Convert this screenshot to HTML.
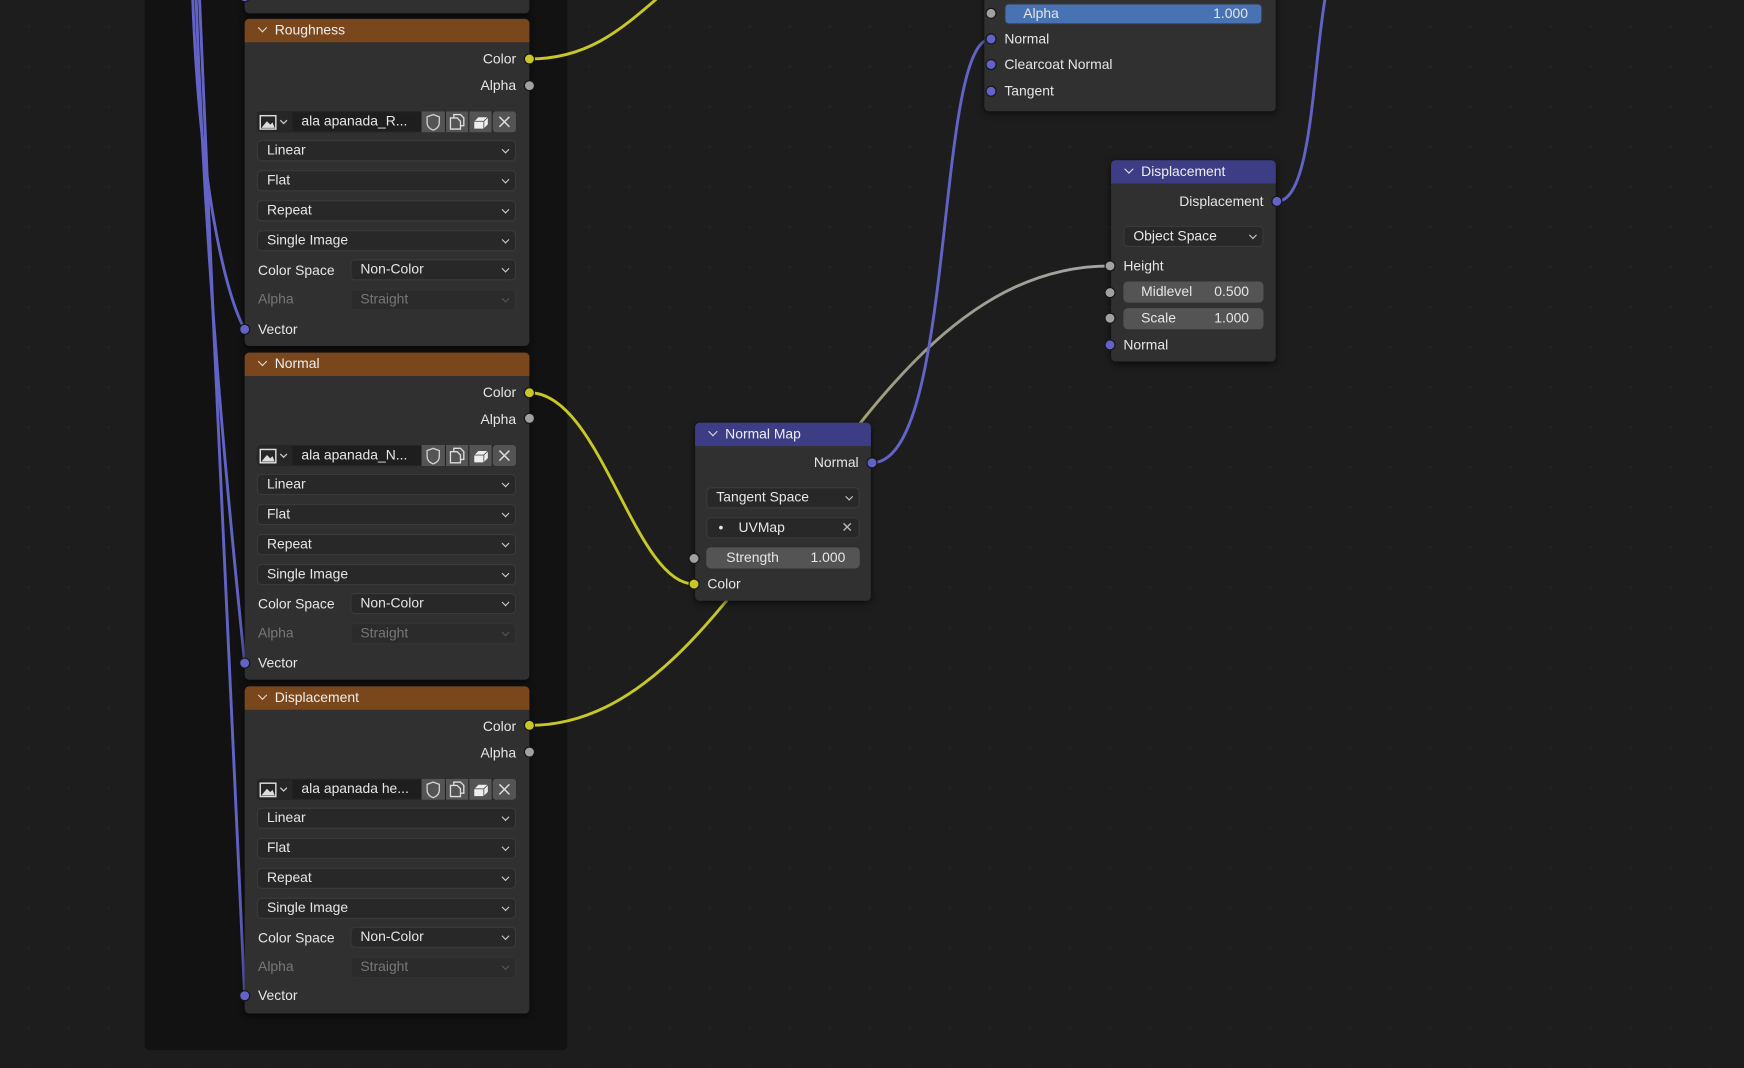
<!DOCTYPE html>
<html><head><meta charset="utf-8"><style>
html,body{margin:0;padding:0;background:#1d1d1d;overflow:hidden;width:1744px;height:1068px}
#w{position:absolute;left:0;top:0;width:1568px;height:960px;transform:scale(1.11224,1.1125);transform-origin:0 0;
background-color:#1d1d1d;background-image:radial-gradient(#242424 1px,transparent 1.3px);background-size:36px 36px;background-position:8px 6px;
font-family:"Liberation Sans","DejaVu Sans",sans-serif;font-size:12.5px;color:#e6e6e6}
.a{position:absolute}
.frame{position:absolute;left:130px;top:-20px;width:380px;height:964px;background:#121212;border-radius:4px}
.node{position:absolute;background:#303030;border-radius:4px;box-shadow:0 2px 6px rgba(0,0,0,.6)}
.hd{position:absolute;left:0;right:0;top:0;height:21px;border-radius:4px 4px 0 0;line-height:20px;padding-left:27px;box-sizing:border-box;color:#eee}
.hd:before{content:"";position:absolute;left:13px;top:5px;width:5px;height:5px;border-right:1.3px solid #ddd;border-bottom:1.3px solid #ddd;transform:rotate(45deg)}
.or{background:#7a461c}.bl{background:#3d3d86}
.t{position:absolute;white-space:nowrap;line-height:16px}
.r{text-align:right}
.dd{position:absolute;height:19px;background:#282828;border:1px solid #3a3a3a;border-radius:4px;box-sizing:border-box;line-height:17px;padding-left:8px;color:#e6e6e6}
.dd.c:after{content:"";position:absolute;right:6px;top:5px;width:4px;height:4px;border-right:1.2px solid #ccc;border-bottom:1.2px solid #ccc;transform:rotate(45deg)}
.dd.dis{color:#777;background:#2b2b2b;border-color:#333}.dd.dis:after{border-color:#555}
.fld{position:absolute;height:19px;background:#545454;border-radius:4px;line-height:19px;color:#e6e6e6;box-sizing:border-box}
.s{position:absolute;width:10px;height:10px;border-radius:50%;border:1px solid #151515;box-sizing:border-box;margin:-5px 0 0 -5px}
.y{background:#c7c729}.g{background:#a1a1a1}.p{background:#6363c7}
.ib{position:absolute;height:19px;background:#262626;border-radius:3px}
.ib svg{position:absolute;left:0;top:0}
</style></head><body><div id="w">
<div class="frame"></div>

<svg class="a" style="left:0;top:0" width="1568" height="960">
<defs><linearGradient id="yg" x1="476" y1="0" x2="998" y2="0" gradientUnits="userSpaceOnUse"><stop offset="0.3" stop-color="#c7c729"/><stop offset="0.65" stop-color="#9a9a8a"/><stop offset="1" stop-color="#a5a5a5"/></linearGradient></defs>
<g fill="none" stroke-width="2.6" stroke-linecap="round">
<path d="M173,-10 C178,150 200,260 220,296" stroke="#6363c7"/>
<path d="M176,-10 C185,250 205,450 220,596" stroke="#6363c7"/>
<path d="M179,-10 C192,300 210,700 220,895" stroke="#6363c7"/>
<path d="M476,53 C530,53 560,25 595,-5" stroke="#c7c729"/>
<path d="M476,353 C540,353 570,525 624,525" stroke="#c7c729"/>
<path d="M476,652 C680,652 760,239 998,239" stroke="url(#yg)"/>
<path d="M784,416 C860,416 840,35 891,35" stroke="#6363c7"/>
<path d="M1148,181 C1180,181 1180,60 1192,-5" stroke="#6363c7"/>
</g></svg>

<div class="node" style="left:220px;top:-20px;width:256px;height:32px"></div>
<div class="s p" style="left:220px;top:-3px"></div>

<!-- shared icon row svg -->
<svg width="0" height="0" style="position:absolute"><defs>
<g id="row">
<rect x="0" y="0" width="233" height="19" rx="3" fill="#262626"/>
<rect x="3" y="4" width="14" height="12" fill="none" stroke="#ddd" stroke-width="1.3"/>
<path d="M4,15 L9,9 L12,12 L14,10 L16,15 Z" fill="#ddd"/>
<path d="M21,8 l3,3 l3,-3" fill="none" stroke="#ccc" stroke-width="1.1"/>
<rect x="32" y="1" width="116" height="17" fill="#1e1e1e"/>
<rect x="148" y="0" width="21" height="19" fill="#545454"/>
<rect x="170" y="0" width="20" height="19" fill="#545454"/>
<rect x="191" y="0" width="20" height="19" fill="#545454"/>
<rect x="212" y="0" width="21" height="19" rx="3" fill="#545454"/>
<path d="M153,5 L158.5,3 L164,5 L164,10 Q164,15 158.5,17 Q153,15 153,10 Z" fill="none" stroke="#cfcfcf" stroke-width="1.2"/>
<path d="M174,6 h6 l3,3 v7 h-9 z M177,6 v-3 h6 l3,3 v7 h-3" fill="none" stroke="#ddd" stroke-width="1.2"/>
<path d="M195,9 l4,-4 h9 l-4,4 z M195,9 h9 v7 h-9 z M204,9 l4,-4 v7 l-4,4 z" fill="#eee" stroke="#545454" stroke-width="0.8"/>
<path d="M218,5 l9,9 M227,5 l-9,9" stroke="#ddd" stroke-width="1.3"/>
</g></defs></svg>

<div class="node" style="left:220px;top:17px;width:256px;height:294px">
<div class="hd or">Roughness</div>
<div class="t r" style="right:12px;top:28px">Color</div><div class="t r" style="right:12px;top:52px">Alpha</div>
<div class="ib" style="left:11px;top:83px;width:233px"><svg width="233" height="19"><use href="#row"/></svg><div class="t" style="left:40px;top:1px">ala apanada_R...</div></div>
<div class="dd c" style="left:11px;top:109px;width:233px">Linear</div>
<div class="dd c" style="left:11px;top:136px;width:233px">Flat</div>
<div class="dd c" style="left:11px;top:163px;width:233px">Repeat</div>
<div class="dd c" style="left:11px;top:190px;width:233px">Single Image</div>
<div class="t" style="left:12px;top:218px">Color Space</div><div class="dd c" style="left:95px;top:216px;width:149px">Non-Color</div>
<div class="t" style="left:12px;top:244px;color:#777">Alpha</div><div class="dd c dis" style="left:95px;top:243px;width:149px">Straight</div>
<div class="t" style="left:12px;top:271px">Vector</div>
</div>
<div class="s y" style="left:476px;top:53px"></div><div class="s g" style="left:476px;top:77px"></div><div class="s p" style="left:220px;top:296px"></div>

<div class="node" style="left:220px;top:317px;width:256px;height:294px">
<div class="hd or">Normal</div>
<div class="t r" style="right:12px;top:28px">Color</div><div class="t r" style="right:12px;top:52px">Alpha</div>
<div class="ib" style="left:11px;top:83px;width:233px"><svg width="233" height="19"><use href="#row"/></svg><div class="t" style="left:40px;top:1px">ala apanada_N...</div></div>
<div class="dd c" style="left:11px;top:109px;width:233px">Linear</div>
<div class="dd c" style="left:11px;top:136px;width:233px">Flat</div>
<div class="dd c" style="left:11px;top:163px;width:233px">Repeat</div>
<div class="dd c" style="left:11px;top:190px;width:233px">Single Image</div>
<div class="t" style="left:12px;top:218px">Color Space</div><div class="dd c" style="left:95px;top:216px;width:149px">Non-Color</div>
<div class="t" style="left:12px;top:244px;color:#777">Alpha</div><div class="dd c dis" style="left:95px;top:243px;width:149px">Straight</div>
<div class="t" style="left:12px;top:271px">Vector</div>
</div>
<div class="s y" style="left:476px;top:353px"></div><div class="s g" style="left:476px;top:376px"></div><div class="s p" style="left:220px;top:596px"></div>

<div class="node" style="left:220px;top:617px;width:256px;height:294px">
<div class="hd or">Displacement</div>
<div class="t r" style="right:12px;top:28px">Color</div><div class="t r" style="right:12px;top:52px">Alpha</div>
<div class="ib" style="left:11px;top:83px;width:233px"><svg width="233" height="19"><use href="#row"/></svg><div class="t" style="left:40px;top:1px">ala apanada he...</div></div>
<div class="dd c" style="left:11px;top:109px;width:233px">Linear</div>
<div class="dd c" style="left:11px;top:136px;width:233px">Flat</div>
<div class="dd c" style="left:11px;top:163px;width:233px">Repeat</div>
<div class="dd c" style="left:11px;top:190px;width:233px">Single Image</div>
<div class="t" style="left:12px;top:218px">Color Space</div><div class="dd c" style="left:95px;top:216px;width:149px">Non-Color</div>
<div class="t" style="left:12px;top:244px;color:#777">Alpha</div><div class="dd c dis" style="left:95px;top:243px;width:149px">Straight</div>
<div class="t" style="left:12px;top:270px">Vector</div>
</div>
<div class="s y" style="left:476px;top:652px"></div><div class="s g" style="left:476px;top:676px"></div><div class="s p" style="left:220px;top:895px"></div>

<div class="node" style="left:625px;top:380px;width:158px;height:160px">
<div class="hd bl">Normal Map</div>
<div class="t r" style="right:11px;top:28px">Normal</div>
<div class="dd c" style="left:10px;top:58px;width:138px">Tangent Space</div>
<div class="dd" style="left:10px;top:85px;width:138px;padding-left:28px">UVMap<span class="a" style="left:10px;top:0">•</span><span class="a" style="right:5px;top:0;color:#bbb">✕</span></div>
<div class="fld" style="left:10px;top:112px;width:138px"><span class="a" style="left:18px">Strength</span><span class="a" style="right:13px">1.000</span></div>
<div class="t" style="left:11px;top:137px">Color</div>
</div>
<div class="s p" style="left:784px;top:416px"></div><div class="s g" style="left:624px;top:502px"></div><div class="s y" style="left:624px;top:525px"></div>

<div class="node" style="left:885px;top:-20px;width:262px;height:120px">
<div class="fld" style="left:18px;top:23px;width:232px;background:#4772b3;border:1px solid #3a3a3a"><span class="a" style="left:16px;top:-1px">Alpha</span><span class="a" style="right:12px;top:-1px">1.000</span></div>
<div class="t" style="left:18px;top:47px">Normal</div>
<div class="t" style="left:18px;top:70px">Clearcoat Normal</div>
<div class="t" style="left:18px;top:94px">Tangent</div>
</div>
<div class="s g" style="left:891px;top:12px"></div><div class="s p" style="left:891px;top:35px"></div><div class="s p" style="left:891px;top:58px"></div><div class="s p" style="left:891px;top:82px"></div>

<div class="node" style="left:999px;top:144px;width:148px;height:181px">
<div class="hd bl">Displacement</div>
<div class="t r" style="right:11px;top:29px">Displacement</div>
<div class="dd c" style="left:11px;top:59px;width:126px">Object Space</div>
<div class="t" style="left:11px;top:87px">Height</div>
<div class="fld" style="left:11px;top:109px;width:126px"><span class="a" style="left:16px">Midlevel</span><span class="a" style="right:13px">0.500</span></div>
<div class="fld" style="left:11px;top:133px;width:126px"><span class="a" style="left:16px">Scale</span><span class="a" style="right:13px">1.000</span></div>
<div class="t" style="left:11px;top:158px">Normal</div>
</div>
<div class="s p" style="left:1148px;top:181px"></div><div class="s g" style="left:998px;top:239px"></div><div class="s g" style="left:998px;top:263px"></div><div class="s g" style="left:998px;top:286px"></div><div class="s p" style="left:998px;top:310px"></div>
</div></body></html>
